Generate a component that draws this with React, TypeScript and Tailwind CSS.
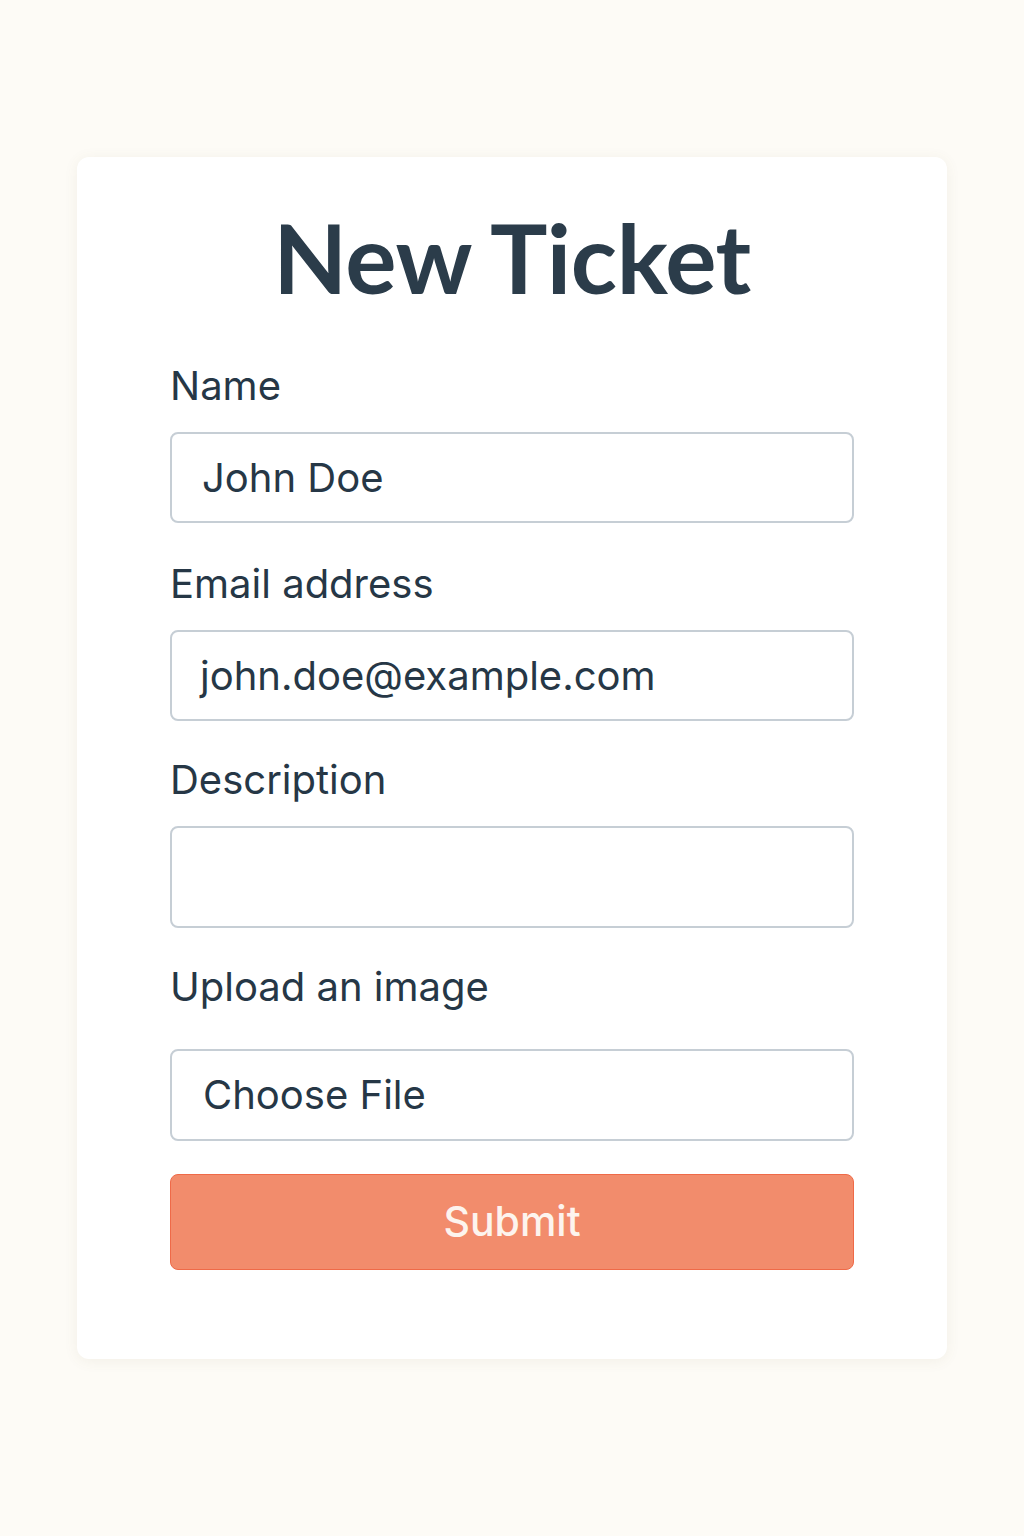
import React from "react";

export default function App() {
  return (
    <div className="min-h-[1536px] w-full bg-[#fdfbf6] pt-[157px]">
      <div
        className="mx-auto flex h-[1202px] w-[870px] flex-col rounded-[12px] bg-white px-[93px] shadow-[0_2px_14px_rgba(120,100,60,0.08)]"
        style={{ fontFamily: "Inter, 'Noto Sans', sans-serif" }}
      >
        <h1
          className="mt-[45px] text-center text-[96px] font-bold leading-[110px] tracking-[-0.4px] text-[#2b3c4a]"
          style={{ fontFamily: "Lato, sans-serif" }}
        >
          New Ticket
        </h1>

        <div className="mt-[50px] flex flex-col">
          <label className="text-[40px] leading-[48px] text-[#263746]">Name</label>
          <div className="mt-[22px] flex h-[91px] items-center rounded-[8px] border-2 border-[#c6ced5] px-[30px] text-[40px] text-[#263746]">
            John Doe
          </div>

          <label className="mt-[37px] text-[40px] leading-[48px] text-[#263746]">Email address</label>
          <div className="mt-[22px] flex h-[91px] items-center rounded-[8px] border-2 border-[#c6ced5] px-[28px] text-[40px] text-[#263746]">
            john.doe@example.com
          </div>

          <label className="mt-[35px] text-[40px] leading-[48px] text-[#263746]">Description</label>
          <div className="mt-[22px] h-[102px] rounded-[8px] border-2 border-[#c6ced5]"></div>

          <label className="mt-[35px] text-[40px] leading-[48px] text-[#263746]">Upload an image</label>
          <div className="mt-[38px] flex h-[92px] items-center rounded-[8px] border-2 border-[#c6ced5] px-[31px] text-[40px] text-[#263746]">
            Choose File
          </div>

          <button className="mt-[33px] flex h-[96px] items-center justify-center rounded-[8px] border border-[#ef6a48] bg-[#f28c6c] text-[41px] font-medium text-[#fdf4ee]">
            Submit
          </button>
        </div>
      </div>
    </div>
  );
}
